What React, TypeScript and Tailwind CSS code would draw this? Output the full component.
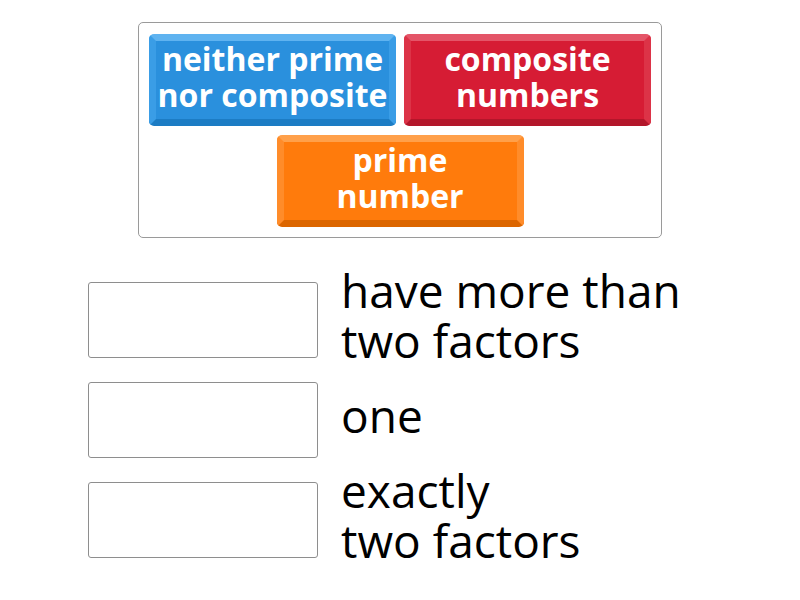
import React from 'react';

const tiles = [
  {
    label: ['neither prime', 'nor composite'],
    face: 'bg-[#2a90dd] border-t-[#5fb3f0] border-x-[#3a9de6] border-b-[#1c7cc4]',
  },
  {
    label: ['composite', 'numbers'],
    face: 'bg-[#d61c34] border-t-[#e45568] border-x-[#dc3347] border-b-[#b3162a]',
  },
  {
    label: ['prime', 'number'],
    face: 'bg-[#ff7b0c] border-t-[#ffa04a] border-x-[#ff8c2a] border-b-[#dc6600]',
  },
];

const rows = [['have more than', 'two factors'], ['one'], ['exactly', 'two factors']];

export default function App() {
  return (
    <div className="w-[800px] h-[600px] bg-white font-['Open_Sans',sans-serif] flex flex-col items-center pt-[22px] overflow-hidden">
      <div className="w-[524px] h-[216px] shrink-0 border border-[#9a9a9a] rounded-[5px] flex flex-wrap justify-center content-start gap-x-[8px] gap-y-[9px] pt-[11px] px-[10px]">
        {tiles.map((t) => (
          <div
            key={t.label[0]}
            className={`w-[247px] h-[92px] rounded-[5px] border-[7px] pb-[6px] flex flex-col items-center justify-center text-white font-bold text-[32px] leading-[36px] ${t.face}`}
          >
            {t.label.map((l) => (
              <span key={l} className="whitespace-nowrap -mx-[7px]">{l}</span>
            ))}
          </div>
        ))}
      </div>
      <div className="w-full pl-[88px] mt-[44px] flex flex-col gap-[24px] shrink-0">
        {rows.map((r) => (
          <div key={r[0]} className="h-[76px] flex items-center gap-[23px]">
            <div className="w-[230px] h-[76px] border border-[#8e8e8e] rounded-[3px] shrink-0" />
            <div className="text-[46px] leading-[50px] text-black pb-[10px]">
              {r.map((l) => (
                <div key={l} className="whitespace-nowrap">{l}</div>
              ))}
            </div>
          </div>
        ))}
      </div>
    </div>
  );
}
